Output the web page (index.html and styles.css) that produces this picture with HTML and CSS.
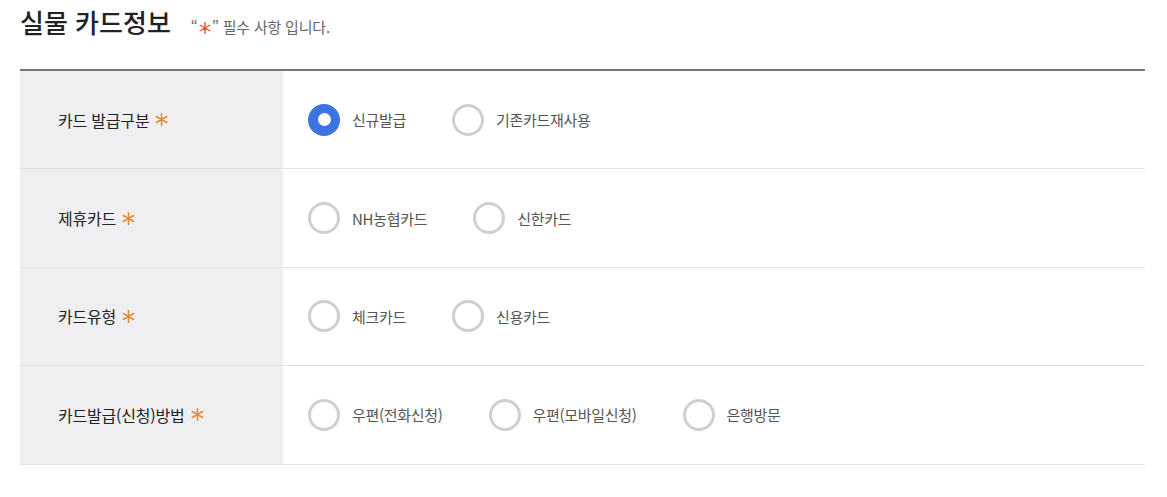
FILE: index.html
```html
<!DOCTYPE html>
<html lang="ko">
<head>
<meta charset="utf-8">
<link rel="stylesheet" href="styles.css">
</head>
<body>
<div class="page">
  <div class="head">
    <h2 class="title">실물 카드정보</h2>
    <p class="note">“<svg class="ast ast-red" viewBox="0 0 12 12" aria-label="*"><path d="M6 0.5V11.5M1.2 3.25L10.8 8.75M1.2 8.75L10.8 3.25"/></svg>” 필수 사항 입니다.</p>
  </div>
  <div class="form">
    <div class="row">
      <div class="label">카드 발급구분<svg class="ast" viewBox="0 0 12 12"><path d="M6 0.5V11.5M1.2 3.25L10.8 8.75M1.2 8.75L10.8 3.25"/></svg></div>
      <div class="opts">
        <label class="opt"><span class="radio on"></span><span class="txt">신규발급</span></label>
        <label class="opt"><span class="radio"></span><span class="txt">기존카드재사용</span></label>
      </div>
    </div>
    <div class="row">
      <div class="label">제휴카드<svg class="ast" viewBox="0 0 12 12"><path d="M6 0.5V11.5M1.2 3.25L10.8 8.75M1.2 8.75L10.8 3.25"/></svg></div>
      <div class="opts">
        <label class="opt"><span class="radio"></span><span class="txt">NH농협카드</span></label>
        <label class="opt"><span class="radio"></span><span class="txt">신한카드</span></label>
      </div>
    </div>
    <div class="row">
      <div class="label">카드유형<svg class="ast" viewBox="0 0 12 12"><path d="M6 0.5V11.5M1.2 3.25L10.8 8.75M1.2 8.75L10.8 3.25"/></svg></div>
      <div class="opts">
        <label class="opt"><span class="radio"></span><span class="txt">체크카드</span></label>
        <label class="opt"><span class="radio"></span><span class="txt">신용카드</span></label>
      </div>
    </div>
    <div class="row">
      <div class="label">카드발급(신청)방법<svg class="ast" viewBox="0 0 12 12"><path d="M6 0.5V11.5M1.2 3.25L10.8 8.75M1.2 8.75L10.8 3.25"/></svg></div>
      <div class="opts">
        <label class="opt"><span class="radio"></span><span class="txt">우편(전화신청)</span></label>
        <label class="opt"><span class="radio"></span><span class="txt">우편(모바일신청)</span></label>
        <label class="opt"><span class="radio"></span><span class="txt">은행방문</span></label>
      </div>
    </div>
  </div>
</div>
</body>
</html>
```
FILE: styles.css
```css
* { box-sizing: border-box; }
body {
  margin: 0;
  background: #fff;
  font-family: "Noto Sans CJK KR", "Noto Sans", sans-serif;
}
.page {
  padding: 0 22px 0 20px;
}
.head {
  display: flex;
  align-items: baseline;
  height: 69px;
  padding-top: 3px;
}
.title {
  margin: 0;
  font-size: 26px;
  font-weight: 500;
  color: #222;
  line-height: 38px;
}
.note {
  margin: 0 0 0 20px;
  font-size: 15px;
  color: #666;
  letter-spacing: -0.2px;
}
.ast {
  width: 13px;
  height: 13px;
  fill: none;
  stroke: #e28a2e;
  stroke-width: 1.4;
  stroke-linecap: round;
  flex: none;
  margin-left: 6px;
}
.ast-red {
  width: 12px;
  height: 12px;
  stroke: #e3572c;
  margin: 0 1px;
  vertical-align: -1px;
}
.form {
  border-top: 2px solid #777;
}
.row {
  display: grid;
  grid-template-columns: 263px 1fr;
  height: 98.4px;
  border-bottom: 1px solid #e2e2e4;
}
.label {
  background: #efeff2;
  display: flex;
  align-items: center;
  padding-left: 38px;
  font-size: 16px;
  color: #222;
  letter-spacing: -0.2px;
}
.opts {
  display: flex;
  align-items: center;
  gap: 46px;
  padding-left: 25px;
}
.opt {
  display: flex;
  align-items: center;
  gap: 12px;
}
.radio {
  width: 32px;
  height: 32px;
  border-radius: 50%;
  border: 3px solid #cfcfd3;
  display: flex;
  align-items: center;
  justify-content: center;
}
.radio.on {
  border: none;
  background: #3e74e1;
}
.radio.on::after {
  content: "";
  width: 13px;
  height: 13px;
  border-radius: 50%;
  background: #fff;
}
.txt {
  font-size: 15px;
  color: #555;
  letter-spacing: -0.3px;
}
```
